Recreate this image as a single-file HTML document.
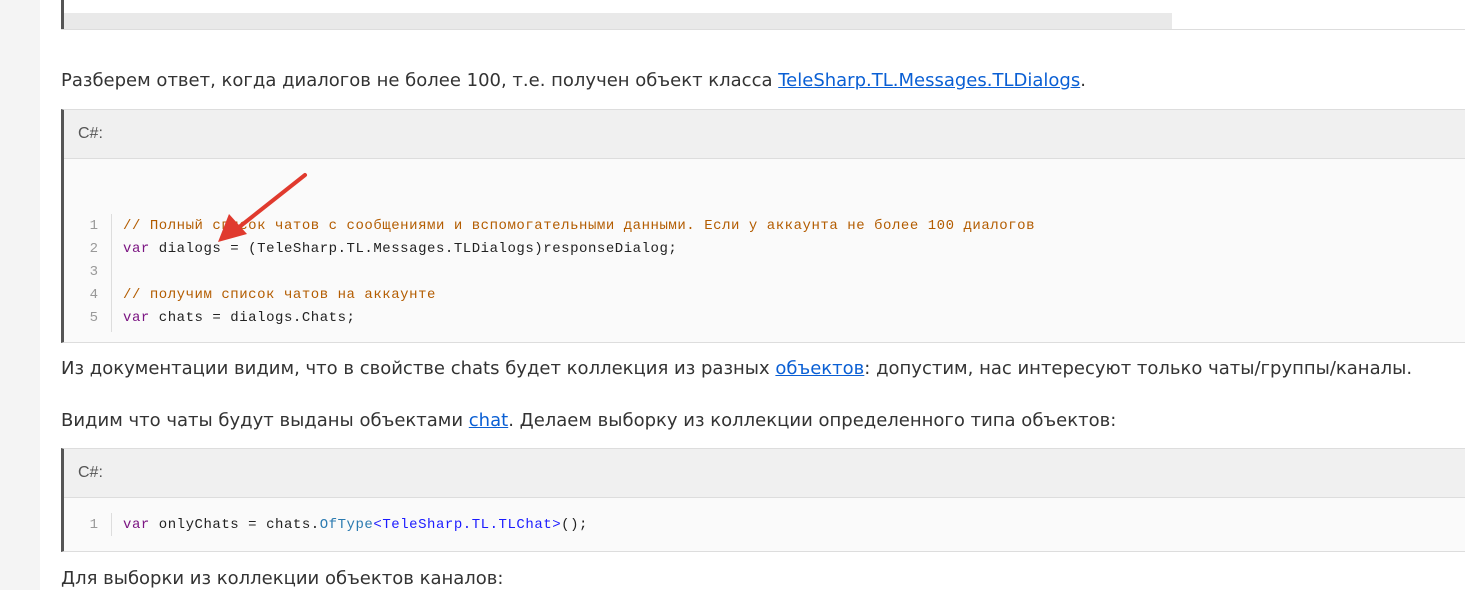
<!DOCTYPE html>
<html><head><meta charset="utf-8"><style>
*{margin:0;padding:0;box-sizing:border-box}
body{width:1465px;height:590px;overflow:hidden;background:#fff;position:relative;font-family:"DejaVu Sans","Liberation Sans",sans-serif;color:#333}
.side{position:absolute;left:0;top:0;width:40px;height:590px;background:#f4f4f4}
.p{position:absolute;left:61px;font-size:18px;white-space:nowrap;line-height:22px}
a{color:#0a5fd4;text-decoration:underline}
.blk{position:absolute;left:61px;right:0;border-left:3px solid #555;border-top:1px solid #ddd;border-bottom:1px solid #ddd;background:#fafafa}
.hd{background:#f0f0f0;height:49px;border-bottom:1px solid #ddd;font-family:"Liberation Sans",sans-serif;font-size:16px;color:#555;padding:15px 0 0 14px}
.ln{position:absolute;font-family:"Liberation Mono",monospace;font-size:14px;letter-spacing:0.54px;white-space:nowrap;color:#222;line-height:23px}
.num{position:absolute;font-family:"Liberation Mono",monospace;font-size:14px;color:#999;width:34px;text-align:right;line-height:23px}
.c{color:#b35c00}.k{color:#7b1482}.t{color:#2a7ab0}.b{color:#1b1bff}
.sep{position:absolute;left:47px;width:1px;background:#ddd}
</style></head><body>
<div class="side"></div>
<div style="position:absolute;left:61px;top:0;width:3px;height:30px;background:#555"></div>
<div style="position:absolute;left:64px;top:13px;width:1108px;height:16px;background:#e9e9e9"></div>
<div style="position:absolute;left:61px;top:29px;right:0;height:1px;background:#ddd"></div>

<div class="p" style="top:70px">Разберем ответ, когда диалогов не более 100, т.е. получен объект класса <a>TeleSharp.TL.Messages.TLDialogs</a>.</div>

<div class="blk" style="top:109px;height:234px">
<div class="hd">C#:</div>
<div class="sep" style="top:104px;height:118px"></div>
<div class="num" style="left:0;top:105px">1</div>
<div class="num" style="left:0;top:128px">2</div>
<div class="num" style="left:0;top:151px">3</div>
<div class="num" style="left:0;top:174px">4</div>
<div class="num" style="left:0;top:197px">5</div>
<div class="ln" style="left:59px;top:105px"><span class="c">// Полный список чатов с сообщениями и вспомогательными данными. Если у аккаунта не более 100 диалогов</span></div>
<div class="ln" style="left:59px;top:128px"><span class="k">var</span> dialogs = (TeleSharp.TL.Messages.TLDialogs)responseDialog;</div>
<div class="ln" style="left:59px;top:174px"><span class="c">// получим список чатов на аккаунте</span></div>
<div class="ln" style="left:59px;top:197px"><span class="k">var</span> chats = dialogs.Chats;</div>
</div>

<svg style="position:absolute;left:0;top:0" width="1465" height="590">
<line x1="305" y1="175" x2="238" y2="228" stroke="#e03a2e" stroke-width="4" stroke-linecap="round"/>
<polygon points="218,242 229,214 247,234" fill="#e03a2e"/>
</svg>

<div class="p" style="top:358px">Из документации видим, что в свойстве chats будет коллекция из разных <a>объектов</a>: допустим, нас интересуют только чаты/группы/каналы.</div>
<div class="p" style="top:410px">Видим что чаты будут выданы объектами <a>chat</a>. Делаем выборку из коллекции определенного типа объектов:</div>

<div class="blk" style="top:448px;height:104px">
<div class="hd">C#:</div>
<div class="sep" style="top:64px;height:23px"></div>
<div class="num" style="left:0;top:65px">1</div>
<div class="ln" style="left:59px;top:65px"><span class="k">var</span> onlyChats = chats.<span class="t">OfType</span><span class="b">&lt;TeleSharp.TL.TLChat&gt;</span>();</div>
</div>

<div class="p" style="top:568px">Для выборки из коллекции объектов каналов:</div>
</body></html>
